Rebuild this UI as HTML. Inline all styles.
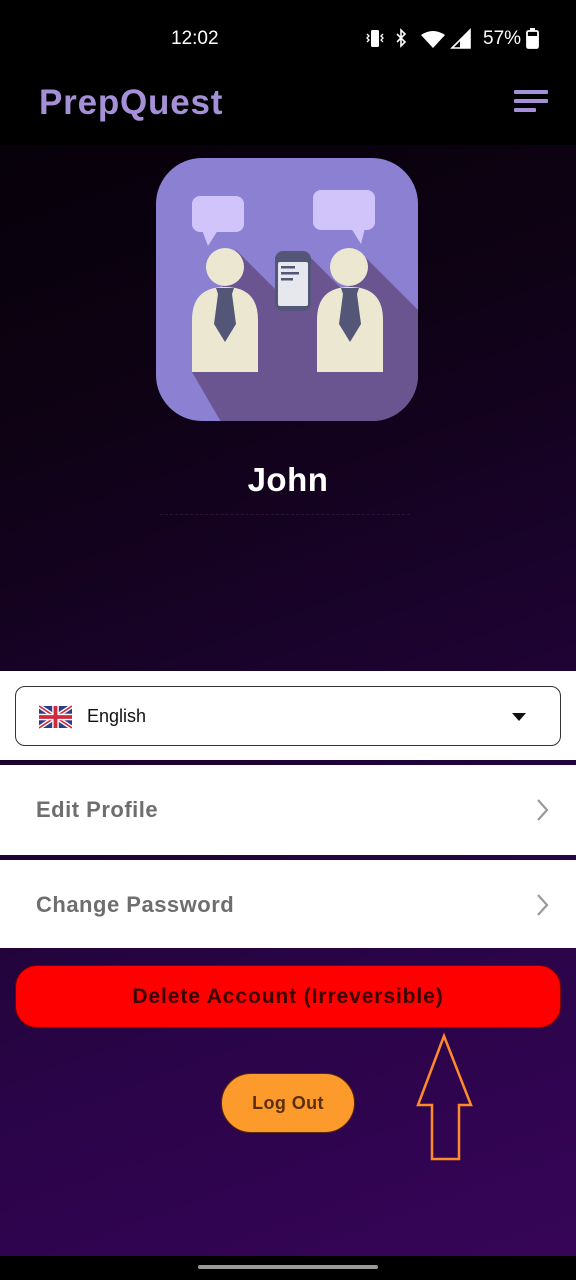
<!DOCTYPE html>
<html><head><meta charset="utf-8">
<style>
*{margin:0;padding:0;box-sizing:border-box}
body{width:576px;height:1280px;overflow:hidden;font-family:"Liberation Sans",sans-serif;position:relative;
background:linear-gradient(160deg,#030005 0%,#0e0214 30%,#1c0330 55%,#2a0448 75%,#370559 100%)}
.abs{position:absolute}
.status{top:0;left:0;width:576px;height:145px;background:#000}
.time{left:171px;top:28px;color:#fff;font-size:19px}
.batt{left:483px;top:28px;color:#fff;font-size:19px}
.title{left:39px;top:83px;color:#a58fd6;font-size:35px;font-weight:bold;letter-spacing:0.8px}
.menu div{position:absolute;background:#a58fd6;height:4px;border-radius:1px}
.white{left:0;width:576px;background:#fff}
.lbl{color:#6e6e6e;font-size:22px;font-weight:bold;left:36px;letter-spacing:0.5px}
.chev{right:26px}
</style></head><body>
<div class="abs status"></div>
<div class="abs time">12:02</div>
<svg class="abs" style="left:364px;top:28px" width="110" height="22" viewBox="0 0 110 22">
<rect x="7" y="2" width="8" height="17" rx="1.5" fill="#fff"/>
<path d="M3 6 l2 2 -2 2 2 2 -2 2 M19 6 l-2 2 2 2 -2 2 2 2" stroke="#fff" stroke-width="1.3" fill="none"/>
<path d="M33 6 l8 8 -4 4 v-16 l4 4 -8 8" stroke="#fff" stroke-width="1.6" fill="none"/>
<path d="M57 7 q12 -8 24 0 l-12 13z" fill="#fff"/>
<path d="M106 2 v18 h-18z" fill="none" stroke="#fff" stroke-width="1.6"/>
<path d="M106 2 v18 h-10 v-8z" fill="#fff"/>
</svg>
<div class="abs batt">57%</div>
<svg class="abs" style="left:526px;top:28px" width="14" height="22"><rect x="4" y="0" width="5" height="3" fill="#fff"/><rect x="1" y="3" width="11" height="17" rx="1.5" fill="none" stroke="#fff" stroke-width="1.8"/><rect x="1" y="8" width="11" height="12" rx="1" fill="#fff"/></svg>
<div class="abs title">PrepQuest</div>
<div class="abs menu" style="left:514px;top:90px;width:35px;height:24px">
<div style="top:0;left:0;width:34px"></div><div style="top:9px;left:0;width:34px"></div><div style="top:18px;left:0;width:22px"></div></div>

<svg class="abs" style="left:156px;top:158px" width="262" height="263" viewBox="0 0 262 263">
<defs><clipPath id="c"><rect width="262" height="263" rx="46"/></clipPath></defs>
<g clip-path="url(#c)">
<rect width="262" height="263" fill="#8c80d2"/>
<path d="M80 92 L262 274 L262 300 L86 300 L36 214z" fill="#6a5591"/>
<path d="M150 95 L262 207 L262 300 L120 300 L120 150z" fill="#6a5591"/>
<path d="M205 95 L262 152 L262 300 L161 300 L161 214z" fill="#6a5591"/>
<rect x="36" y="38" width="52" height="36" rx="8" fill="#d1c4fb"/>
<path d="M46 72 l6 16 l10 -16z" fill="#d1c4fb"/>
<rect x="157" y="32" width="62" height="40" rx="8" fill="#d1c4fb"/>
<path d="M195 70 l10 16 l4 -16z" fill="#d1c4fb"/>
<circle cx="69" cy="109" r="19" fill="#ebe7d1"/>
<path d="M36 214 V162 Q36 129 69 129 Q102 129 102 162 V214z" fill="#ebe7d1"/>
<path d="M60 130 h18 l-2 6 l4 30 l-11 18 l-11 -18 l4 -30z" fill="#535676"/>
<circle cx="193" cy="109" r="19" fill="#ebe7d1"/>
<path d="M161 214 V162 Q161 129 194 129 Q227 129 227 162 V214z" fill="#ebe7d1"/>
<path d="M185 130 h18 l-2 6 l4 30 l-11 18 l-11 -18 l4 -30z" fill="#535676"/>
<rect x="119" y="93" width="36" height="60" rx="8" fill="#535676"/>
<rect x="122" y="104" width="30" height="44" rx="2" fill="#e6e8ee"/>
<rect x="125" y="108" width="14" height="2.5" fill="#535676"/>
<rect x="125" y="114" width="18" height="2.5" fill="#535676"/>
<rect x="125" y="120" width="12" height="2.5" fill="#535676"/>
</g></svg>

<div class="abs" style="left:0;width:576px;top:461px;text-align:center;color:#fff;font-size:33px;font-weight:bold;letter-spacing:0.5px">John</div>
<div class="abs" style="left:160px;top:514px;width:250px;height:2px;border-top:1px dashed rgba(70,45,90,.4)"></div>

<div class="abs white" style="top:671px;height:89px"></div>
<div class="abs" style="left:15px;top:686px;width:546px;height:60px;border:1.5px solid #333;border-radius:10px;background:#fff"></div>
<svg class="abs" style="left:39px;top:705px" width="33" height="24" viewBox="0 0 60 40">
<rect width="60" height="40" fill="#2b3f86"/>
<path d="M0 0L60 40M60 0L0 40" stroke="#fff" stroke-width="8"/>
<path d="M0 0L60 40M60 0L0 40" stroke="#cf2b3e" stroke-width="3"/>
<path d="M30 0v40M0 20h60" stroke="#fff" stroke-width="12"/>
<path d="M30 0v40M0 20h60" stroke="#cf2b3e" stroke-width="7"/></svg>
<div class="abs" style="left:87px;top:706px;font-size:18px;color:#111">English</div>
<svg class="abs" style="left:511px;top:712px" width="16" height="10"><path d="M1 1h14l-7 8z" fill="#111"/></svg>

<div class="abs white" style="top:765px;height:90px"></div>
<div class="abs lbl" style="top:797px">Edit Profile</div>
<svg class="abs chev" style="top:798px" width="14" height="24"><path d="M2 2l9 10-9 10" stroke="#999" stroke-width="2.2" fill="none"/></svg>
<div class="abs white" style="top:860px;height:88px"></div>
<div class="abs lbl" style="top:892px">Change Password</div>
<svg class="abs chev" style="top:893px" width="14" height="24"><path d="M2 2l9 10-9 10" stroke="#999" stroke-width="2.2" fill="none"/></svg>

<div class="abs" style="left:15px;top:965px;width:546px;height:63px;background:#fe0000;border-radius:22px;border:1px solid #7a0000;text-align:center;line-height:62px;color:#3a0000;font-size:21px;font-weight:bold;letter-spacing:0.9px">Delete Account (Irreversible)</div>
<div class="abs" style="left:221px;top:1073px;width:134px;height:60px;background:#fd9a2c;border-radius:30px;border:1px solid #5a2a00;text-align:center;line-height:59px;color:#5a2f08;font-size:18px;font-weight:bold;letter-spacing:0.4px">Log Out</div>
<svg class="abs" style="left:410px;top:1030px" width="70" height="135"><path d="M34 6 L61 75 L49 75 L49 129 L22 129 L22 75 L8 75 Z" fill="none" stroke="#ff8a2a" stroke-width="2.5"/></svg>

<div class="abs" style="left:0;top:1256px;width:576px;height:24px;background:#000"></div>
<div class="abs" style="left:198px;top:1265px;width:180px;height:4px;border-radius:2px;background:#9a9a9a"></div>
</body></html>
